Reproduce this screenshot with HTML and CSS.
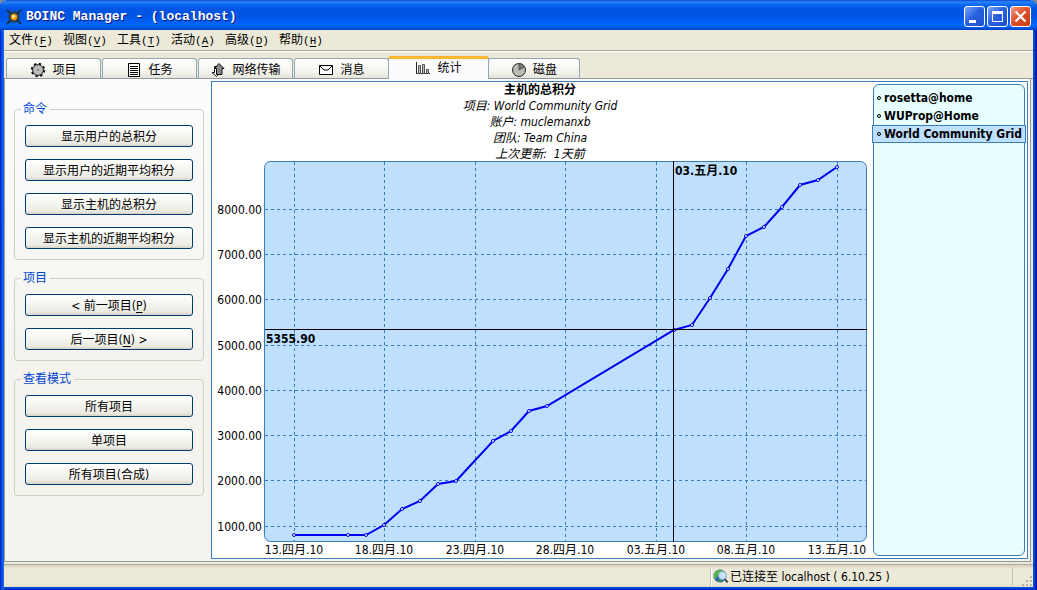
FILE: index.html
```html
<!DOCTYPE html>
<html lang="zh-CN">
<head>
<meta charset="utf-8">
<title>BOINC Manager - (localhost)</title>
<link rel="stylesheet" href="styles.css">
</head>
<body>
<div class="window">
  <header class="titlebar">
    <svg class="app-icon" width="16" height="16" viewBox="0 0 16 16">
      <path d="M0 0l5 3 3-1 3 1 5-3-3 5 1 3-1 3 3 5-5-3-3 1-3-1-5 3 3-5-1-3 1-3z" fill="#2a4358"/>
      <path d="M1 1l14 14M15 1L1 15" stroke="#1c3042" stroke-width="1.6"/>
      <circle cx="8" cy="8" r="3.2" fill="#f39a0c"/><circle cx="7.6" cy="7.4" r="1.6" fill="#ffe98a"/>
    </svg>
    <h1 class="title">BOINC Manager - (localhost)</h1>
    <button class="win-btn" aria-label="最小化"><svg width="21" height="21" viewBox="0 0 21 21"><path d="M5 14h7v3H5z" fill="#fff"/></svg></button>
    <button class="win-btn" aria-label="最大化"><svg width="21" height="21" viewBox="0 0 21 21"><path d="M5.500 6.500h10v9h-10z" fill="none" stroke="#fff"/><path d="M5 5h11v3H5z" fill="#fff"/></svg></button>
    <button class="win-btn close" aria-label="关闭"><svg width="21" height="21" viewBox="0 0 21 21"><path d="M5.500 5.500l10 10M15.500 5.500l-10 10" stroke="#fff" stroke-width="2.200"/></svg></button>
  </header>

  <nav class="menubar">
    <button>文件<span>(<u>F</u>)</span></button>
    <button>视图<span>(<u>V</u>)</span></button>
    <button>工具<span>(<u>T</u>)</span></button>
    <button>活动<span>(<u>A</u>)</span></button>
    <button>高级<span>(<u>D</u>)</span></button>
    <button>帮助<span>(<u>H</u>)</span></button>
  </nav>

  <div class="tabs" role="tablist">
    <button class="tab" role="tab">
      <svg width="16" height="16" viewBox="0 0 16 16"><circle cx="8" cy="8" r="6.200" fill="none" stroke="#111" stroke-width="2" stroke-dasharray="2.400 2.470"/><circle cx="8" cy="8" r="5.400" fill="#bbb" stroke="#111" stroke-width=".9"/><circle cx="8" cy="8" r="1" fill="#777"/></svg>项目</button>
    <button class="tab" role="tab">
      <svg width="16" height="16" viewBox="0 0 16 16"><path d="M2.500 1.500h11v13h-11z" fill="#fff" stroke="#000"/><path d="M4 4.500h8M4 6.500h8M4 8.500h8M4 10.500h8M4 12.500h8" stroke="#000"/></svg>任务</button>
    <button class="tab" role="tab">
      <svg width="16" height="16" viewBox="0 0 16 16"><path d="M4.500 4.500h4v6h2L6.500 14.500 2 10.500h2.500z" fill="#fff" stroke="#111"/><path d="M9 1.500l5 5h-2v6H6.500v-6h-2z" fill="#888" stroke="#111"/></svg>网络传输</button>
    <button class="tab" role="tab">
      <svg width="16" height="16" viewBox="0 0 16 16"><path d="M1.500 3.500h13v9h-13z" fill="#fff" stroke="#000"/><path d="M2 4l4 4h4l4-4" fill="none" stroke="#000"/></svg>消息</button>
    <button class="tab active" role="tab" aria-selected="true">
      <svg width="16" height="16" viewBox="0 0 16 16"><path d="M1.500 2v11.500H15" fill="none" stroke="#222"/><path d="M3.500 5.500h2v8h-2zM7.500 4.500h2v9h-2zM11.500 9.500h2v4h-2z" fill="#bbb" stroke="#555"/></svg>统计</button>
    <button class="tab last" role="tab">
      <svg width="16" height="16" viewBox="0 0 16 16"><circle cx="8" cy="8" r="6.500" fill="#b9bdb3" stroke="#222"/><path d="M8 8V1.500A6.500 6.500 0 0 1 13.600 5z" fill="#777" stroke="#444" stroke-width=".7"/></svg>磁盘</button>
  </div>

  <main class="page">
    <aside class="tasks">
      <fieldset>
        <legend>命令</legend>
        <button>显示用户的总积分</button>
        <button>显示用户的近期平均积分</button>
        <button>显示主机的总积分</button>
        <button>显示主机的近期平均积分</button>
      </fieldset>
      <fieldset>
        <legend>项目</legend>
        <button>&lt; 前一项目(<u>P</u>)</button>
        <button>后一项目(<u>N</u>) &gt;</button>
      </fieldset>
      <fieldset>
        <legend>查看模式</legend>
        <button>所有项目</button>
        <button>单项目</button>
        <button>所有项目(合成)</button>
      </fieldset>
    </aside>

    <section class="stats">
      <div class="graph">
        <h2>主机的总积分</h2>
        <p>项目: World Community Grid</p>
        <p>账户: muclemanxb</p>
        <p>团队: Team China</p>
        <p>上次更新: &nbsp;1天前</p>
        <svg class="chart" viewBox="212 162 656 396" role="img" aria-label="主机的总积分">
          <rect x="264.500" y="161.500" width="602" height="380" rx="6" fill="#bfdfff" stroke="#3a7db8"/>
          <g class="grid">
            <path d="M265 209.500H866M265 254.500H866M265 299.500H866M265 345.500H866M265 390.500H866M265 435.500H866M265 480.500H866M265 526.500H866"/>
            <path d="M294.500 162V541M384.500 162V541M475.500 162V541M565.500 162V541M656.500 162V541M746.500 162V541M837.500 162V541"/>
          </g>
          <g class="axis y">
            <text x="262" y="214">8000.00</text>
            <text x="262" y="259">7000.00</text>
            <text x="262" y="304">6000.00</text>
            <text x="262" y="350">5000.00</text>
            <text x="262" y="395">4000.00</text>
            <text x="262" y="440">3000.00</text>
            <text x="262" y="485">2000.00</text>
            <text x="262" y="531">1000.00</text>
          </g>
          <g class="axis x">
            <text x="294" y="554">13.四月.10</text>
            <text x="384" y="554">18.四月.10</text>
            <text x="475" y="554">23.四月.10</text>
            <text x="565" y="554">28.四月.10</text>
            <text x="656" y="554">03.五月.10</text>
            <text x="746" y="554">08.五月.10</text>
            <text x="837" y="554">13.五月.10</text>
          </g>
          <polyline class="series" points="294,535 348,535 366,535 384,525 402,509 420,501 438,484 456,481 493,441 511,431 529,411 547,406 674,330 692,325 710,298 728,269 746,236 764,227 782,207 800,185 818,180 837,167"/>
          <g class="dots">
            <circle cx="294" cy="535" r="1.500"/><circle cx="348" cy="535" r="1.500"/><circle cx="366" cy="535" r="1.500"/><circle cx="384" cy="525" r="1.500"/><circle cx="402" cy="509" r="1.500"/><circle cx="420" cy="501" r="1.500"/><circle cx="438" cy="484" r="1.500"/><circle cx="456" cy="481" r="1.500"/><circle cx="493" cy="441" r="1.500"/><circle cx="511" cy="431" r="1.500"/><circle cx="529" cy="411" r="1.500"/><circle cx="547" cy="406" r="1.500"/><circle cx="674" cy="330" r="1.500"/><circle cx="692" cy="325" r="1.500"/><circle cx="710" cy="298" r="1.500"/><circle cx="728" cy="269" r="1.500"/><circle cx="746" cy="236" r="1.500"/><circle cx="764" cy="227" r="1.500"/><circle cx="782" cy="207" r="1.500"/><circle cx="800" cy="185" r="1.500"/><circle cx="818" cy="180" r="1.500"/><circle cx="837" cy="167" r="1.500"/>
          </g>
          <path class="crosshair" d="M673.500 161V542M265 329.500H867"/>
          <g class="marker">
            <text x="675" y="175">03.五月.10</text>
            <text x="266" y="343">5355.90</text>
          </g>
        </svg>
      </div>
      <ul class="projects">
        <li>rosetta@home</li>
        <li>WUProp@Home</li>
        <li class="selected">World Community Grid</li>
      </ul>
    </section>
  </main>

  <footer class="statusbar">
    <div class="connection">
      <svg width="16" height="16" viewBox="0 0 16 16"><circle cx="7" cy="7" r="6.500" fill="#2a62b8"/><path d="M1 5C3 1 7 0 10 1.500L8 5 4.500 6.500 3 10C1 9 .5 7 1 5z" fill="#58b347"/><path d="M5 10l4 1-1 2.500-2-.5z" fill="#3f9b3a"/><circle cx="9.500" cy="6.500" r="4" fill="#d8f1fb" fill-opacity=".9" stroke="#8ab3cc"/><path d="M12 10l2.500 3.500" stroke="#345" stroke-width="2"/></svg>
      <span>已连接至 localhost ( 6.10.25 )</span>
    </div>
    <svg class="grip" width="12" height="12" viewBox="0 0 12 12"><path d="M9 1h2v2H9zM5 5h2v2H5zM9 5h2v2H9zM1 9h2v2H1zM5 9h2v2H5zM9 9h2v2H9z" fill="#b8b4a3"/></svg>
  </footer>
</div>
</body>
</html>
```

FILE: styles.css
```css
* { box-sizing: border-box; }

body {
  margin: 0;
  background: #7b8a9c;
  color: #000;
  font: 12px/16px "DejaVu Sans Condensed", "Noto Sans CJK SC", sans-serif;
}

button { font: inherit; color: inherit; }
h1, h2, p, ul { margin: 0; padding: 0; }

.window {
  display: flex;
  flex-direction: column;
  min-height: 100vh;
  padding: 0 4px 4px;
  border-radius: 7px 7px 0 0;
  background:
    linear-gradient(to right, #0019cf, #0855dd 2px, #166aee 4px) left / 4px 100% no-repeat,
    linear-gradient(to left, #00138c, #0032c8 2px, #0855dd 4px) right / 4px 100% no-repeat,
    linear-gradient(to top, #00138c, #0032c8 2px, #0855dd 4px) bottom / 100% 4px no-repeat,
    #ece9d8;
}

.titlebar {
  display: flex;
  align-items: center;
  gap: 2px;
  height: 30px;
  margin: 0 -4px;
  padding: 3px 6px 0;
  border-radius: 7px 7px 0 0;
  background: linear-gradient(#0a4cd8, #2a83f8 2px, #0a66f0 5px, #0055e5 9px, #0054e3 17px, #0066ff 25px, #0060f6 27px, #0040c0);
}

.title {
  flex: 1;
  margin-left: 2px;
  color: #fff;
  font: bold 13px/16px "Liberation Mono", monospace;
  text-shadow: 1px 1px 0 #0a1883;
}

.win-btn {
  width: 21px;
  height: 21px;
  padding: 0;
  overflow: hidden;
  border: 1px solid #fff;
  border-radius: 3px;
  background: linear-gradient(135deg, #7fa8f5, #2a62e0 45%, #1c4fd0);
}
.win-btn svg { display: block; margin: -1px; }
.win-btn.close { background: linear-gradient(135deg, #f0a088, #e0502c 45%, #c83c14); }

.menubar {
  display: flex;
  height: 22px;
  border-bottom: 1px solid #fff;
  box-shadow: inset 0 -1px #aca899;
}
.menubar button {
  width: 54px;
  padding: 0 0 0 5px;
  border: 0;
  background: none;
  text-align: left;
}
.menubar span { font: 11px/16px "Liberation Mono", monospace; }
u { text-underline-offset: 2px; }

.tabs {
  display: flex;
  align-items: flex-end;
  height: 27px;
  padding: 0 2px;
  border-bottom: 1px solid #919b9c;
}
.tab {
  display: flex;
  align-items: center;
  justify-content: center;
  gap: 6px;
  width: 95px;
  height: 20px;
  margin-right: 1px;
  padding: 2px 0 0;
  border: 1px solid #91a7b4;
  border-bottom: 0;
  border-radius: 3px 3px 0 0;
  background: linear-gradient(#fff, #f5f5f0 60%, #e6e5dc);
}
.tab.active {
  width: 101px;
  height: 23px;
  margin: 0 -1px -1px -2px;
  padding: 0 0 2px;
  border-top: 3px solid #ffb52e;
  background: #fcfcfe;
  z-index: 1;
}
.tab.last { width: 92px; }

.page {
  flex: 1;
  display: flex;
  margin-right: 2px;
  border: solid #919b9c;
  border-width: 0 1px 1px;
  background: linear-gradient(#fcfcfe, #f4f3ee 60%);
}

.tasks {
  flex: 0 0 206px;
  padding: 22px 7px 0 9px;
}
fieldset {
  display: flex;
  flex-direction: column;
  gap: 12px;
  margin: 0 0 10px;
  padding: 8px 10px 10px;
  border: 1px solid #d0d0bf;
  border-radius: 4px;
  min-width: 0;
}
legend {
  padding: 0 3px 0 2px;
  margin-left: -4px;
  color: #0046d5;
}
fieldset button {
  height: 22px;
  padding: 2px 0 0;
  border: 1px solid #003c74;
  border-radius: 3px;
  background: linear-gradient(#fff, #f4f4ef 50%, #ebebe4 85%, #d8d2c4);
}

.stats {
  flex: 1;
  display: flex;
  gap: 5px;
  margin: 2px 2px 2px 0;
  padding: 0 2px 0 0;
  border: 1px solid #3a7db8;
  background: #fff;
}
.graph {
  flex: 1;
  display: flex;
  flex-direction: column;
  min-width: 0;
  text-align: center;
}
.graph h2 { font-size: 12px; line-height: 16px; }
.graph p { font-style: italic; }

.chart {
  flex: 1;
  width: 100%;
  min-height: 0;
  overflow: visible;
}
.grid path { fill: none; stroke: #3a7db8; stroke-dasharray: 3 3; shape-rendering: crispEdges; }
.crosshair { stroke: #000; shape-rendering: crispEdges; }
.axis.y { text-anchor: end; }
.axis.x { text-anchor: middle; }
.series { fill: none; stroke: #0000f0; stroke-width: 2; }
.dots { fill: #fff; stroke: #0000f0; }
.marker { font-weight: bold; }

.projects {
  width: 152px;
  margin: 2px 0;
  padding: 4px 0 0;
  border: 1px solid #3a7db8;
  border-radius: 6px;
  background: #e8ffff;
  list-style: none;
  font-weight: bold;
  white-space: nowrap;
}
.projects li {
  display: flex;
  align-items: center;
  gap: 3px;
  height: 18px;
  margin: 0 -2px;
  padding-left: 4px;
  border: 1px solid transparent;
}
.projects li::before {
  content: "";
  width: 2px;
  height: 2px;
  border: 1px solid #000;
  border-radius: 2px;
}
.projects .selected { border-color: #3a7db8; background: #bfdfff; }

.statusbar {
  display: flex;
  justify-content: flex-end;
  align-items: stretch;
  height: 23px;
  margin-top: 2px;
  border-top: 1px solid #aca899;
  background: linear-gradient(#d6d2c2, #ece9d8 4px, #ece9d8 18px, #e2dfcd);
}
.connection {
  display: flex;
  align-items: center;
  gap: 1px;
  width: 303px;
  margin: 2px 0 1px;
  padding-left: 2px;
  border: solid #c5c2b2;
  border-width: 0 1px;
  box-shadow: inset 1px 0 #fff;
}
.grip { align-self: flex-end; margin-left: 8px; }
```
